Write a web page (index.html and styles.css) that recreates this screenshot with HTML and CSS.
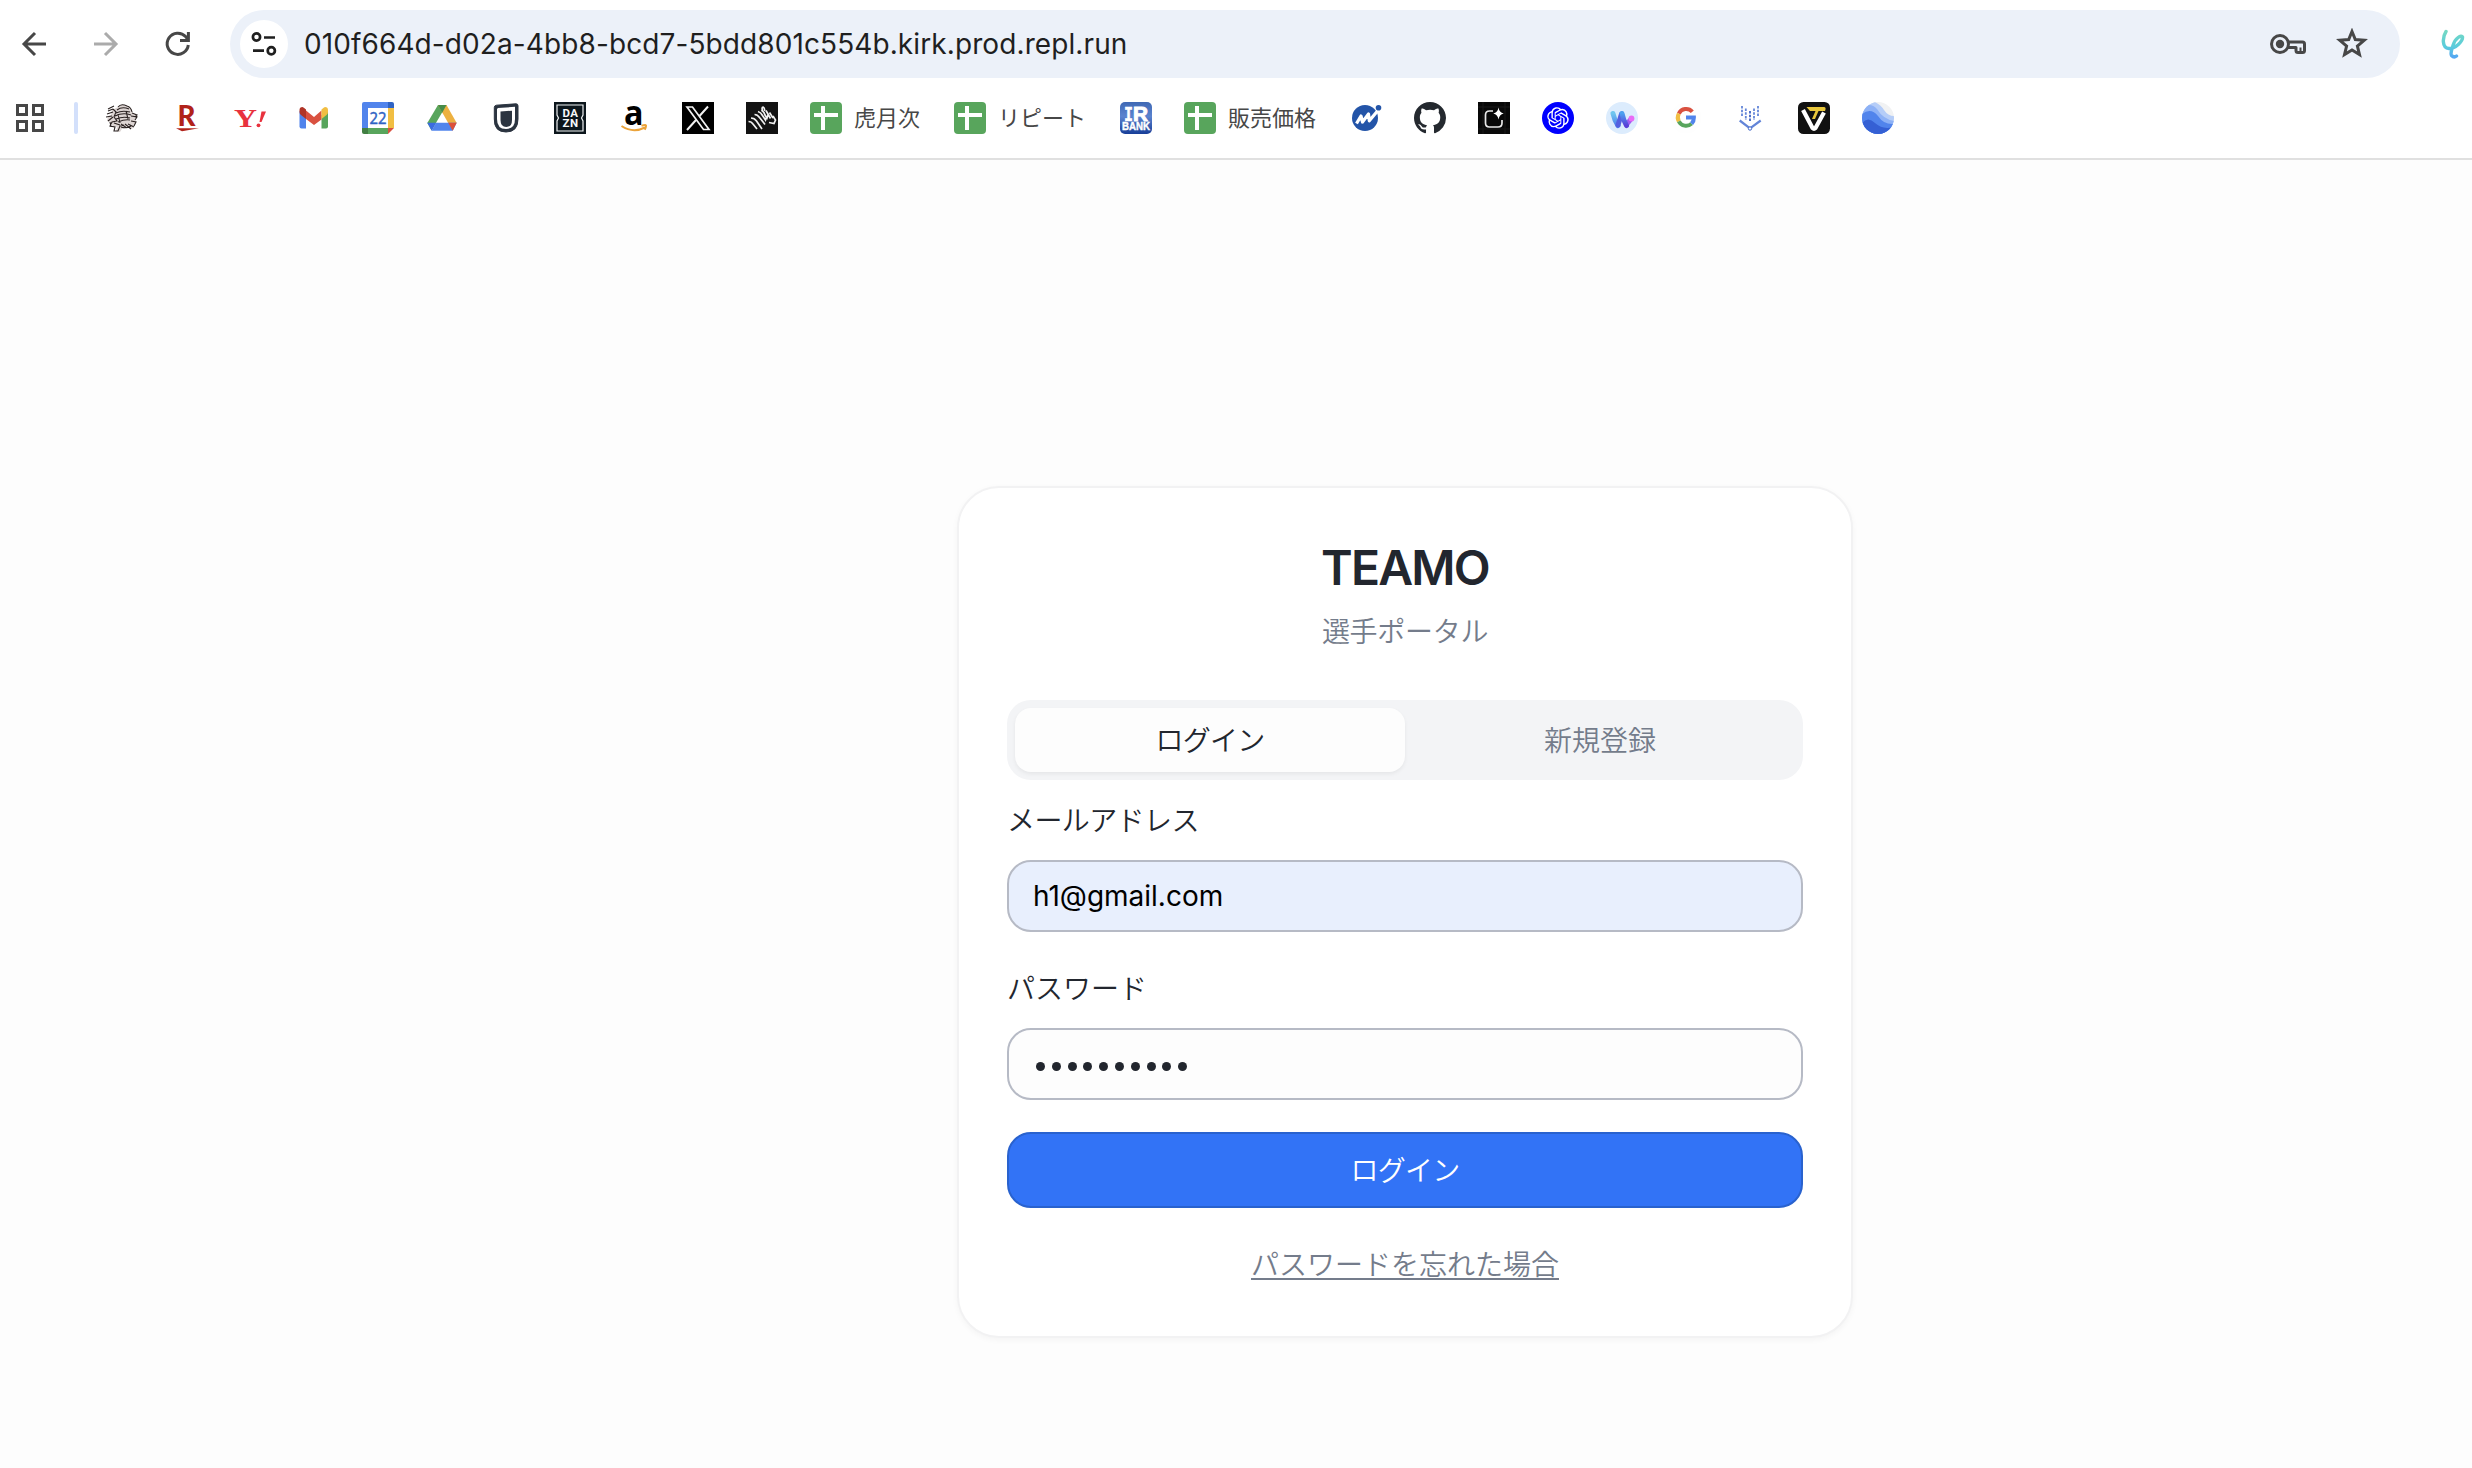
FILE: index.html
```html
<!DOCTYPE html>
<html lang="ja">
<head>
<meta charset="utf-8">
<title>TEAMO 選手ポータル</title>
<link rel="stylesheet" href="styles.css">
</head>
<body>
<header class="browser">
  <div class="toolbar">
    <nav class="nav">
      <svg class="nav-icon" viewBox="0 0 24 24"><path d="M24 12H2M13 1 2 12l11 11"/></svg>
      <svg class="nav-icon disabled" viewBox="0 0 24 24"><path d="M0 12h22M11 1l11 11-11 11"/></svg>
      <svg class="nav-icon" viewBox="0 0 24 24"><path d="M22.3 13A10.6 10.6 0 1 1 19.6 4.6L22 7.5"/><path d="M22.4 0v8.4H14"/></svg>
    </nav>
    <div class="address">
      <span class="site-info">
        <svg width="28" height="28" viewBox="0 0 28 28" fill="none" stroke="#1f1f1f" stroke-width="2.7"><circle cx="6.5" cy="7" r="3.6"/><path d="M14 7.5h11M3 20.7h11"/><circle cx="21.3" cy="20.8" r="3.6"/></svg>
      </span>
      <span class="url">010f664d-d02a-4bb8-bcd7-5bdd801c554b.kirk.prod.repl.run</span>
      <svg class="key" viewBox="0 0 36 20"><g fill="none" stroke="#474747" stroke-width="3"><circle cx="10" cy="10" r="8.5"/><path d="M18 8h14.5q2 0 2 2v6.500q0 2-2 2H28q-2 0-2-2V13.500h-8" stroke-linejoin="round"/><path d="M30.500 13.500v4" stroke-width="2"/></g><circle cx="10" cy="10" r="4.200" fill="#474747"/></svg>
      <svg class="star" viewBox="0 0 32 30"><path d="M16 3.500 19.300 11.600 28.200 12.300 21.400 18 23.500 26.600 16 22 8.500 26.600 10.600 18 3.800 12.300 12.700 11.600Z"/></svg>
    </div>
    <svg class="extension" viewBox="0 0 24 32"><defs><linearGradient id="ext" x1="0" y1="0" x2="0" y2="1"><stop offset="0" stop-color="#74d8c4"/><stop offset=".6" stop-color="#5accdc"/><stop offset="1" stop-color="#55a8f2"/></linearGradient></defs><path d="M5 3.500C1.500 9 .5 20 8 20.500 15 20.500 22 13 21.500 9 20.500 6.500 14 10 12 17.500 11 21 9 25 10.500 27.500q2.500 2.500 5 .5" fill="none" stroke="url(#ext)" stroke-width="3.400" stroke-linecap="round"/></svg>
  </div>

  <div class="bookmarks">
    <svg class="apps" viewBox="0 0 28 28"><path d="M1.500 1.500h9v9h-9zM17.500 1.500h9v9h-9zM1.500 17.500h9v9h-9zM17.500 17.500h9v9h-9z"/></svg>
    <span class="divider"></span>
    <div class="bookmark-list">
      <svg class="fav" viewBox="0 0 32 32"><path d="M12 5q3-4 9-1 4 1 5 6l4 3q2 2-1 3l1 5-4 6-5-3-4 1-3 5-4-1 1-4-4-1-3-4-3-1 1-5 3-1 1-5z" fill="#ddd5d3"/><g fill="none" stroke="#2b2322" stroke-width="1.100"><path d="M12 5q3-4 9-1 4 1 5 6M2 9l5-2M1 12l6-2M0 15l6-1M2 19l5-4M2 7l6-3M11 8q5-4 12-1M10 11q6-3 14-1M9 14q8-4 16-1M10 17q7-3 14-1M12 20q7-3 12-2M26 11l5 2-2 2M25 14l6 1-2 3M25 19l5 1-2 4M22 22l6 3M19 22l6 5M15 22l6 4M7 7l3 3-2 5 3 4-5 1-2 4 5 1-1 4 4 0 2-5 4-1M8 21l6 2M15 25q5 2 10-1M4 20l1 5M12 12l2 9M20 9l2 8"/></g></svg>
      <svg class="fav" viewBox="0 0 32 32"><text x="7.500" y="24" font-size="27.500" font-weight="900" fill="#b1221a" font-family="Lato" textLength="18" lengthAdjust="spacingAndGlyphs">R</text><path d="M6 26.200h23l-17 3z" fill="#b1221a"/></svg>
      <svg class="fav" viewBox="0 0 32 32"><text x="0" y="25" font-size="25" font-weight="700" fill="#e8323e" font-family="Liberation Serif" textLength="23" lengthAdjust="spacingAndGlyphs">Y</text><path d="M27.500 9.500H32l-4.500 10.500h-2z" fill="#e8323e"/><circle cx="24.500" cy="23.300" r="1.900" fill="#e8323e"/></svg>
      <svg class="fav" viewBox="0 0 32 32"><path d="M1.500 9v15.500a2 2 0 0 0 2 2H8V13z" fill="#5184ec"/><path d="M23.500 13v13.500H28a2 2 0 0 0 2-2V9z" fill="#58a55c"/><path d="M8 8.500l8 6.500 7.500-6.500v9L16 23l-8-6z" fill="#d95140"/><path d="M1.500 10V8q0-3 3-3 1 0 3.500 2.500V17l-5-4q-1.500-1-1.500-3" fill="#b03427"/><path d="M30 10V8q0-3-3-3-1 0-3.500 2.500V17l5-4q1.500-1 1.500-3" fill="#f1be42"/></svg>
      <svg class="fav" viewBox="0 0 32 32"><path d="M2 0h24v6H6v20H0V2q0-2 2-2" fill="#5184ec"/><path d="M26 0h4q2 0 2 2v4h-6z" fill="#2f63c4"/><path d="M26 6h6v20h-6z" fill="#f1be42"/><path d="M6 26h20v6H6z" fill="#58a55c"/><path d="M0 26h6v6H2q-2 0-2-2z" fill="#427f43"/><path d="M26 26h6l-6 6z" fill="#d95140"/><path d="M6 6h20v20H6z" fill="#fff"/><text x="7.500" y="22" font-size="17" fill="#2f63c4" stroke="#2f63c4" stroke-width=".5" font-family="Open Sans" font-weight="400" textLength="17" lengthAdjust="spacingAndGlyphs">22</text></svg>
      <svg class="fav" viewBox="0 0 32 32"><path d="M12 3h8.500l-15 25.500L1.300 21z" fill="#58a55c"/><path d="M12 3h8.500l10.200 18h-8.500z" fill="#edb140"/><path d="M5.700 28.700 10 20.800h20.700l-4 7.900z" fill="#5184ec"/><path d="M12 3h8.500l-4.300 7.700z" fill="#478c49"/><path d="M1.300 20.800H10l-4.300 7.900z" fill="#3b6be0"/><path d="M22.200 20.800h8.500l-4 7.900z" fill="#dd5038"/></svg>
      <svg class="fav" viewBox="0 0 32 32"><path d="M6.500 3.200 26 1.800q2 0 2 2V17q0 13-12 13T4.300 17V5.500q0-2 2.200-2.300" fill="#2b3440" stroke="#2b3440"/><path d="M8 6l17-1.200V17q0 10-9 10T7 17V7z" fill="#fff"/><path d="M10.500 9.500 22 8.700V18q0 7-5.700 7-5.800 0-5.800-7z" fill="#2b3440"/></svg>
      <svg class="fav" viewBox="0 0 32 32"><path d="M0 0h32v32H0z" fill="#0c161c"/><path d="M3 3h26v10l-1.500 3 1.500 3v10H3V19l1.500-3L3 13z" fill="none" stroke="#eef1f2" stroke-width="1.200"/><g fill="#f7f8f8" font-family="Roboto" font-weight="700" font-size="11.500"><text x="8.500" y="15" textLength="15.500">DA</text><text x="8.500" y="25" textLength="15.500">ZN</text></g></svg>
      <svg class="fav" viewBox="0 0 32 32"><text x="6" y="22.500" font-size="34" font-weight="700" font-family="Open Sans" textLength="19.500" lengthAdjust="spacingAndGlyphs">a</text><path d="M3.500 24q11.500 7.500 23.500 1.500M23.500 23.700q5-1.400 4.500.3-.1 2-1.300 3.800" fill="none" stroke="#eba33a" stroke-width="2"/></svg>
      <svg class="fav" viewBox="0 0 32 32"><path d="M0 0h32v32H0z"/><path d="M5 5h5.500l16.500 22.500h-5.500z" fill="none" stroke="#f2f2f2" stroke-width="1.700"/><path d="M26 4.500 17.500 14M14 18l-9 10" stroke="#f2f2f2" stroke-width="2"/></svg>
      <svg class="fav" viewBox="0 0 32 32"><path d="M0 0h32v32H0z" fill="#131313"/><g fill="none" stroke="#f1f1f1" stroke-width="1.700"><path d="M2.500 19.500q3 0 4.500 2.500l4 5M5 16q3.500 0 5.500 3l5.500 8M8.500 12.500q3 0 5 3l5.500 7M12 9.500q3 1 4.500 4l3 4.500 1-3M15.500 8q2.500 2 3.500 5l2 3 1-3M20 8.500l4.500 8M23.500 10.500l3.500 5.500M27 14l2.500 4-1.500 3.500-5-1M16.500 9.500q-1-4.500.5-4.500 2 1 1.500 4"/></g></svg>
      <div class="bookmark"><svg class="fav" viewBox="0 0 32 32"><rect width="32" height="32" rx="4" fill="#58a55c"/><path d="M4 11h7V4h4v7h13v4H15v13h-4V15H4z" fill="#fff"/></svg><span class="bookmark-text">虎月次</span></div>
      <div class="bookmark"><svg class="fav" viewBox="0 0 32 32"><rect width="32" height="32" rx="4" fill="#58a55c"/><path d="M4 11h7V4h4v7h13v4H15v13h-4V15H4z" fill="#fff"/></svg><span class="bookmark-text">リピート</span></div>
      <svg class="fav" viewBox="0 0 32 32"><defs><linearGradient id="ir" x1="0" y1="0" x2="0" y2="1"><stop offset="0" stop-color="#3f68b4"/><stop offset=".45" stop-color="#5a83cf"/><stop offset="1" stop-color="#173e98"/></linearGradient></defs><rect width="32" height="32" rx="5" fill="url(#ir)"/><g fill="#fff" stroke="#fff" font-weight="700"><text x="4" y="18.500" font-size="19.500" stroke-width=".6" font-family="DejaVu Sans Mono" textLength="9" lengthAdjust="spacingAndGlyphs">I</text><text x="13" y="18.500" font-size="19.500" stroke-width="1" font-family="Liberation Sans" textLength="15" lengthAdjust="spacingAndGlyphs">R</text><text x="2" y="28" font-size="10" stroke-width=".4" font-family="Liberation Sans" textLength="28" lengthAdjust="spacingAndGlyphs">BANK</text></g></svg>
      <div class="bookmark"><svg class="fav" viewBox="0 0 32 32"><rect width="32" height="32" rx="4" fill="#58a55c"/><path d="M4 11h7V4h4v7h13v4H15v13h-4V15H4z" fill="#fff"/></svg><span class="bookmark-text">販売価格</span></div>
      <svg class="fav" viewBox="0 0 32 32"><circle cx="15" cy="16" r="13" fill="#2354a8"/><circle cx="28.500" cy="5.700" r="2.800" fill="#2354a8"/><path d="M6.500 21.500 11 14l1.500 6 6-8 .8 6.800L27.500 9" fill="none" stroke="#fff" stroke-width="3.200" stroke-linejoin="round"/></svg>
      <svg class="fav" viewBox="0 0 16 16"><path fill="#24292f" d="M8 0C3.580 0 0 3.580 0 8c0 3.540 2.290 6.530 5.470 7.590.4.070.55-.17.55-.38 0-.19-.01-.82-.01-1.490-2.010.37-2.530-.49-2.690-.94-.09-.23-.48-.94-.82-1.130-.28-.15-.68-.52-.01-.53.63-.01 1.080.58 1.230.82.72 1.210 1.870.87 2.330.66.070-.52.28-.87.51-1.070-1.780-.2-3.640-.89-3.640-3.950 0-.87.31-1.590.82-2.150-.08-.2-.36-1.020.08-2.120 0 0 .67-.21 2.200.82.64-.18 1.320-.27 2-.27s1.360.09 2 .27c1.530-1.040 2.200-.82 2.200-.82.44 1.100.16 1.920.08 2.120.51.56.82 1.270.82 2.150 0 3.070-1.870 3.750-3.650 3.950.29.25.54.73.54 1.480 0 1.070-.01 1.930-.01 2.200 0 .21.15.46.55.38A8.010 8.010 0 0 0 16 8c0-4.420-3.580-8-8-8"/></svg>
      <svg class="fav" viewBox="0 0 32 32"><path d="M0 0h32v32H0z" fill="#080808"/><path d="M0 5h32M0 27h32M5 0v32M27 0v32" stroke="#181818"/><path d="M15 9h-3.500Q7.500 9 7.500 13v8q0 4 4 4H20q4 0 4-4v-3" fill="none" stroke="#e8e8e8" stroke-width="1.700"/><path d="M20.500 5.500q.8 5 5.200 6-4.400 1-5.200 6-.8-5-5.200-6 4.400-1 5.200-6" fill="#fff"/></svg>
      <svg class="fav" viewBox="0 0 32 32"><circle cx="16" cy="16" r="16" fill="#00f"/><path transform="translate(5.200 5.200) scale(.9)" fill="#fff" d="M22.2819 9.8211a5.9847 5.9847 0 0 0-.5157-4.9108 6.0462 6.0462 0 0 0-6.5098-2.9A6.0651 6.0651 0 0 0 4.9807 4.1818a5.9847 5.9847 0 0 0-3.9977 2.9 6.0462 6.0462 0 0 0 .7427 7.0966 5.98 5.98 0 0 0 .511 4.9107 6.051 6.051 0 0 0 6.5146 2.9001A5.9847 5.9847 0 0 0 13.2599 24a6.0557 6.0557 0 0 0 5.7718-4.2058 5.9894 5.9894 0 0 0 3.9977-2.9001 6.0557 6.0557 0 0 0-.7475-7.0729zm-9.022 12.6081a4.4755 4.4755 0 0 1-2.8764-1.0408l.1419-.0804 4.7783-2.7582a.7948.7948 0 0 0 .3927-.6813v-6.7369l2.02 1.1686a.071.071 0 0 1 .038.052v5.5826a4.504 4.504 0 0 1-4.4945 4.4944zm-9.6607-4.1254a4.4708 4.4708 0 0 1-.5346-3.0137l.142.0852 4.783 2.7582a.7712.7712 0 0 0 .7806 0l5.8428-3.3685v2.3324a.0804.0804 0 0 1-.0332.0615L9.74 19.9502a4.4992 4.4992 0 0 1-6.1408-1.6464zM2.3408 7.8956a4.485 4.485 0 0 1 2.3655-1.9728V11.6a.7664.7664 0 0 0 .3879.6765l5.8144 3.3543-2.0201 1.1685a.0757.0757 0 0 1-.071 0l-4.8303-2.7865A4.504 4.504 0 0 1 2.3408 7.872zm16.5963 3.8558L13.1038 8.364 15.1192 7.2a.0757.0757 0 0 1 .071 0l4.8303 2.7913a4.4944 4.4944 0 0 1-.6765 8.1042v-5.6772a.79.79 0 0 0-.407-.667zm2.0107-3.0231l-.142-.0852-4.7735-2.7818a.7759.7759 0 0 0-.7854 0L9.409 9.2297V6.8974a.0662.0662 0 0 1 .0284-.0615l4.8303-2.7866a4.4992 4.4992 0 0 1 6.6802 4.66zM8.3065 12.863l-2.02-1.1638a.0804.0804 0 0 1-.038-.0567V6.0742a4.4992 4.4992 0 0 1 7.3757-3.4537l-.142.0805L8.704 5.459a.7948.7948 0 0 0-.3927.6813zm1.0976-2.3654l2.602-1.4998 2.6069 1.4998v2.9994l-2.5974 1.4997-2.6067-1.4997Z"/></svg>
      <svg class="fav" viewBox="0 0 32 32"><defs><linearGradient id="w1" x1="0" y1="0" x2="0" y2="1"><stop offset="0" stop-color="#70c6ee"/><stop offset="1" stop-color="#4f82ec"/></linearGradient><linearGradient id="w2" x1="0" y1="0" x2="0" y2="1"><stop offset="0" stop-color="#4aa0f0"/><stop offset="1" stop-color="#5a3fd8"/></linearGradient></defs><circle cx="16" cy="16" r="16" fill="#dcecfd"/><g fill="none" stroke-linecap="round" stroke-width="5"><path d="M20.500 22.500 25 17" stroke="#a05df0"/><path d="M7 11.500q1.500 7 5 12" stroke="url(#w1)"/><path d="M12 23 15.500 12" stroke="#5560e0"/><path d="M16 11.500q1.500 7 4.500 12" stroke="url(#w2)"/></g><circle cx="25.500" cy="16.500" r="2.900" fill="#e86cf6"/></svg>
      <svg class="fav" viewBox="0 0 32 32"><circle cx="16" cy="16" r="15.500" fill="#fefefe"/><g fill="none" stroke-width="4"><path d="M22.300 9.800A8.200 8.200 0 0 0 8.800 11.600" stroke="#d95140"/><path d="M8.800 11.600a8.200 8.200 0 0 0 0 7.800" stroke="#f1be42"/><path d="M8.800 19.400a8.200 8.200 0 0 0 12.800 2.200" stroke="#58a55c"/><path d="M21.600 21.600Q24 19 23.900 15.500H16" stroke="#5184ec"/></g></svg>
      <svg class="fav" viewBox="0 0 32 32"><g fill="none" stroke="#6385d8" stroke-width="1.800" stroke-dasharray="2.500 1.200"><path d="M8 4v10M24 4v10M11.800 6.500V18M20 6.500V18" /><path d="M16 9v10" stroke="#3f63c5"/></g><path d="M5.700 18.500 16 26.300l10.700-7.800" fill="none" stroke="#6385d8" stroke-width="2.200"/><circle cx="16" cy="26.500" r="1.700" fill="#fff" stroke="#4168c8"/></svg>
      <svg class="fav" viewBox="0 0 32 32"><rect width="32" height="32" rx="5.500" fill="#111"/><path d="M8.500 5H26q2 0 1.500 2.500L27 9h-6.500l-3.500 8h-3l3.500-8H12z" fill="#e9c73b"/><path d="M5 8l9.500 18q1.500 1.500 3 0L26 10.500" fill="none" stroke="#fff" stroke-width="4.200"/></svg>
      <svg class="fav" viewBox="0 0 32 32"><clipPath id="globe"><circle cx="16" cy="16" r="16"/></clipPath><g clip-path="url(#globe)"><path d="M0 0h32v32H0z" fill="#f1f2f3"/><path d="M0 0h13q6 3 9 8 4 6 10 6v18H0z" fill="#b5cdf8"/><path d="M0 5q9-5 15 2 6 10 17 12v13H0z" fill="#8db1f6"/><path d="M0 12q9-7 16 2 6 9 16 8v10H0z" fill="#5184ec"/><path d="M0 21q6-7 13 0 8 7 18 4v7H0z" fill="#3560d4"/></g></svg>
    </div>
  </div>
</header>

<main class="page">
  <section class="card">
    <h1 class="title">TEAMO</h1>
    <p class="subtitle">選手ポータル</p>
    <div class="tabs">
      <div class="tab active">ログイン</div>
      <div class="tab">新規登録</div>
    </div>
    <div class="field">
      <div class="label label-email">メールアドレス</div>
      <div class="input autofilled">h1@gmail.com</div>
    </div>
    <div class="field">
      <div class="label">パスワード</div>
      <div class="input password"><i></i><i></i><i></i><i></i><i></i><i></i><i></i><i></i><i></i><i></i></div>
    </div>
    <div class="submit">ログイン</div>
    <div class="forgot"><a class="forgot-link">パスワードを忘れた場合</a></div>
  </section>
</main>
</body>
</html>
```
FILE: styles.css
```css
* { box-sizing: border-box; }

body {
  margin: 0;
  height: 1468px;
  overflow: hidden;
  background: #fdfdfd;
  color: #22262e;
  font-family: Inter, "Noto Sans CJK JP", sans-serif;
  font-size: 28px;
  font-weight: 350;
}

svg { display: block; flex: none; }

/* Browser chrome */
.browser {
  height: 160px;
  background: #fff;
  border-bottom: 2px solid #e0e0e0;
}

.toolbar {
  display: flex;
  align-items: center;
  height: 88px;
  padding-left: 22px;
}

.nav { display: flex; gap: 48px; margin-right: 40px; }
.nav-icon { width: 24px; height: 24px; fill: none; stroke: #474747; stroke-width: 3; overflow: visible; }
.nav-icon.disabled { stroke: #ababab; }

.address {
  display: flex;
  align-items: center;
  width: 2170px;
  height: 68px;
  padding: 0 32px 0 10px;
  border-radius: 34px;
  background: #ecf1f9;
}

.site-info {
  display: flex;
  align-items: center;
  justify-content: center;
  width: 48px;
  height: 48px;
  border-radius: 50%;
  background: #fff;
}

.url {
  margin-left: 16px;
  color: #1f1f1f;
  font-weight: 400;
  letter-spacing: .1px;
  white-space: nowrap;
}

.key { width: 36px; height: 20px; margin-left: auto; }
.star { width: 32px; height: 30px; margin: 0 0 2px 30px; fill: none; stroke: #474747; stroke-width: 3; }
.extension { width: 24px; height: 32px; margin-left: 41px; }

.bookmarks { display: flex; align-items: center; height: 60px; padding-left: 16px; }
.apps { width: 28px; height: 28px; fill: none; stroke: #474747; stroke-width: 3; }
.divider { width: 4px; height: 32px; margin: 0 28px 0 30px; border-radius: 2px; background: #d3e0fb; }
.bookmark-list { display: flex; align-items: center; gap: 32px; }
.fav { width: 32px; height: 32px; overflow: visible; }
.bookmark { display: flex; align-items: center; gap: 12px; margin-right: 2px; }
.bookmark-text {
  color: #474747;
  font-size: 22px;
  font-weight: 400;
  line-height: 32px;
  white-space: nowrap;
}

/* Login card */
.page { padding: 326px 0 0 957px; }

.card {
  width: 896px;
  height: 852px;
  padding: 48px;
  border: 2px solid #f2f2f3;
  border-radius: 42px;
  background: #fff;
  box-shadow: 0 2px 6px rgba(0, 0, 0, .04);
}

.title {
  margin: 0;
  font-size: 48px;
  font-weight: 600;
  line-height: 64px;
  letter-spacing: -1.8px;
  text-align: center;
}

.subtitle {
  margin: 12px 0 0;
  color: #747c8b;
  line-height: 40px;
  letter-spacing: -.3px;
  text-align: center;
}

.tabs {
  display: flex;
  height: 80px;
  margin-top: 48px;
  padding: 8px;
  border-radius: 24px;
  background: #f3f4f6;
}

.tab {
  display: flex;
  flex: 1;
  align-items: center;
  justify-content: center;
  padding-bottom: 3px;
  border-radius: 16px;
  color: #747c8b;
}

.tab.active {
  background: #fdfdfd;
  color: #22262e;
  letter-spacing: -.7px;
  box-shadow: 0 2px 4px rgba(0, 0, 0, .06);
}

.field { padding-top: 21px; }
.field + .field { padding-top: 37px; }
.label { height: 59px; line-height: 40px; }
.label-email { letter-spacing: -.6px; }

.input {
  display: flex;
  align-items: center;
  height: 72px;
  padding: 0 24px;
  border: 2px solid #b6bac5;
  border-radius: 24px;
  background: #fdfdfd;
  font-weight: 400;
}

.input.autofilled { background: #e8effd; color: #000; }

.password { gap: 6.8px; padding: 4px 0 0 27px; }
.password i { width: 9px; height: 9px; border-radius: 50%; background: #22262e; }

.submit {
  display: flex;
  align-items: center;
  justify-content: center;
  height: 76px;
  margin-top: 32px;
  padding-bottom: 3px;
  border: 2px solid #2962ce;
  border-radius: 24px;
  background: #3273f6;
  color: #fff;
  letter-spacing: -.7px;
}

.forgot { margin-top: 37px; line-height: 40px; text-align: center; }
.forgot-link {
  color: #747c8b;
  text-decoration: underline;
  text-decoration-thickness: 2px;
  text-underline-offset: 3px;
  text-decoration-skip-ink: none;
}
```
